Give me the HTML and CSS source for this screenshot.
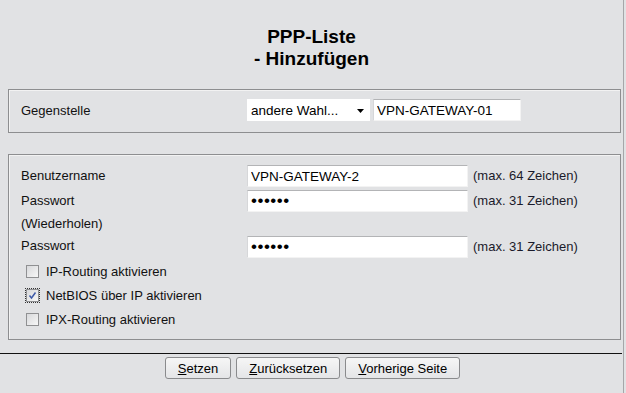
FILE: index.html
```html
<!DOCTYPE html>
<html lang="de">
<head>
    <meta charset="UTF-8">
    <title>PPP-Liste - Hinzufügen</title>
    <link rel="stylesheet" href="styles.css">
</head>
<body>
    <div class="page">
        <h1 class="title">PPP-Liste<br>- Hinzufügen</h1>

        <div class="panel panel-peer">
            <span class="label peer-label">Gegenstelle</span>
            <span class="select-wrap">
                <select class="select"><option>andere Wahl...</option></select>
                <svg class="arrow" width="7" height="4" viewBox="0 0 7 4"><path d="M0 0h7L3.5 4z"/></svg>
            </span>
            <input class="field field-peer" type="text" value="VPN-GATEWAY-01">
        </div>

        <div class="panel panel-user">
            <div class="form-grid">
                <label class="label">Benutzername</label>
                <input class="field" type="text" value="VPN-GATEWAY-2">
                <span class="note">(max. 64 Zeichen)</span>

                <label class="label">Passwort</label>
                <input class="field field-pass" type="password" value="geheim">
                <span class="note">(max. 31 Zeichen)</span>

                <label class="label label-repeat">(Wiederholen)<br>Passwort</label>
                <input class="field field-pass field-repeat" type="password" value="geheim">
                <span class="note note-repeat">(max. 31 Zeichen)</span>
            </div>

            <ul class="options">
                <li class="option"><span class="box"></span>IP-Routing aktivieren</li>
                <li class="option"><span class="box focused"><svg width="9" height="9" viewBox="0 0 9 9"><path d="M1.5 4.5l2 2.5L7.5 1.5" fill="none" stroke="#3d5aa8" stroke-width="1.5"/></svg></span>NetBIOS über IP aktivieren</li>
                <li class="option"><span class="box"></span>IPX-Routing aktivieren</li>
            </ul>
        </div>

        <hr class="divider">

        <div class="actions">
            <button class="btn"><u>S</u>etzen</button>
            <button class="btn"><u>Z</u>urücksetzen</button>
            <button class="btn"><u>V</u>orherige Seite</button>
        </div>
    </div>
</body>
</html>
```

FILE: styles.css
```css
body {
    margin: 0;
    background-color: #e1e2e4;
    font-family: "Liberation Sans", Arial, sans-serif;
    font-size: 13px;
    color: #111;
}
.page {
    width: 624px;
    min-height: 393px;
    border-right: 1px solid #a6a7a9;
    padding-top: 26px;
    box-sizing: border-box;
}
.title {
    margin: 0;
    font-size: 19px;
    line-height: 22px;
    text-align: center;
    color: #000;
}
.panel {
    margin: 19px 2px 0 8px;
    border: 1px solid #8d8e90;
    box-shadow: inset 1px 1px 0 #f2f2f2;
}
.panel-peer {
    display: flex;
    align-items: center;
    padding: 9px 12px 11px;
}
.peer-label {
    width: 226px;
}
.select-wrap {
    position: relative;
    display: inline-block;
    margin-right: 3px;
}
.select {
    appearance: none;
    -webkit-appearance: none;
    width: 123px;
    height: 22px;
    border: none;
    background: #fff;
    padding: 0 0 0 4px;
    font-family: inherit;
    font-size: 13.5px;
    color: #000;
}
.arrow {
    position: absolute;
    right: 6px;
    top: 10px;
}
.field {
    height: 22px;
    box-sizing: border-box;
    border: 1px solid;
    border-color: #b3b4b6 #f3f3f3 #f3f3f3 #d6d7d9;
    background: #fff;
    padding: 0 3px;
    font-family: inherit;
    font-size: 13.5px;
    color: #000;
    outline: none;
}
.field-pass {
    font-size: 17px;
    letter-spacing: 0.5px;
}
.field-peer {
    width: 148px;
}
.panel-user {
    margin-top: 21px;
    padding: 10px 12px 8px;
}
.form-grid {
    display: grid;
    grid-template-columns: 226px 221px auto;
    grid-template-rows: 25px 23px 23px 22px;
}
.form-grid .label,
.form-grid .note {
    line-height: 22px;
}
.form-grid .note {
    padding-left: 5px;
}
.form-grid .field {
    width: 221px;
}
.label-repeat {
    grid-row: 3 / 5;
}
.field-repeat,
.note-repeat {
    grid-row: 4;
}
.field-repeat {
    grid-column: 2;
}
.note-repeat {
    grid-column: 3;
}
.note {
    color: #1a1a2a;
}
.options {
    list-style: none;
    margin: 1px 0 0;
    padding: 0;
}
.option {
    display: flex;
    align-items: center;
    height: 24px;
}
.box {
    width: 13px;
    height: 13px;
    box-sizing: border-box;
    margin: 0 7px 0 5px;
    border: 1px solid #8f9092;
    background: linear-gradient(135deg, #d8d9db, #f7f7f7);
    display: flex;
    align-items: center;
    justify-content: center;
}
.focused {
    outline: 1px dotted #333;
    outline-offset: 0;
}
.divider {
    margin: 13px 1px 0 0;
    border: none;
    border-top: 1px solid #111;
    height: 0;
}
.actions {
    display: flex;
    justify-content: center;
    gap: 5px;
    margin-top: 3px;
    padding-left: 2px;
}
.btn {
    height: 22px;
    padding: 0 12px;
    border: 1px solid #8a8b8d;
    border-radius: 3px;
    background: linear-gradient(#f6f6f6, #e4e5e7);
    font-family: inherit;
    font-size: 13px;
    color: #000;
    cursor: pointer;
}
```
